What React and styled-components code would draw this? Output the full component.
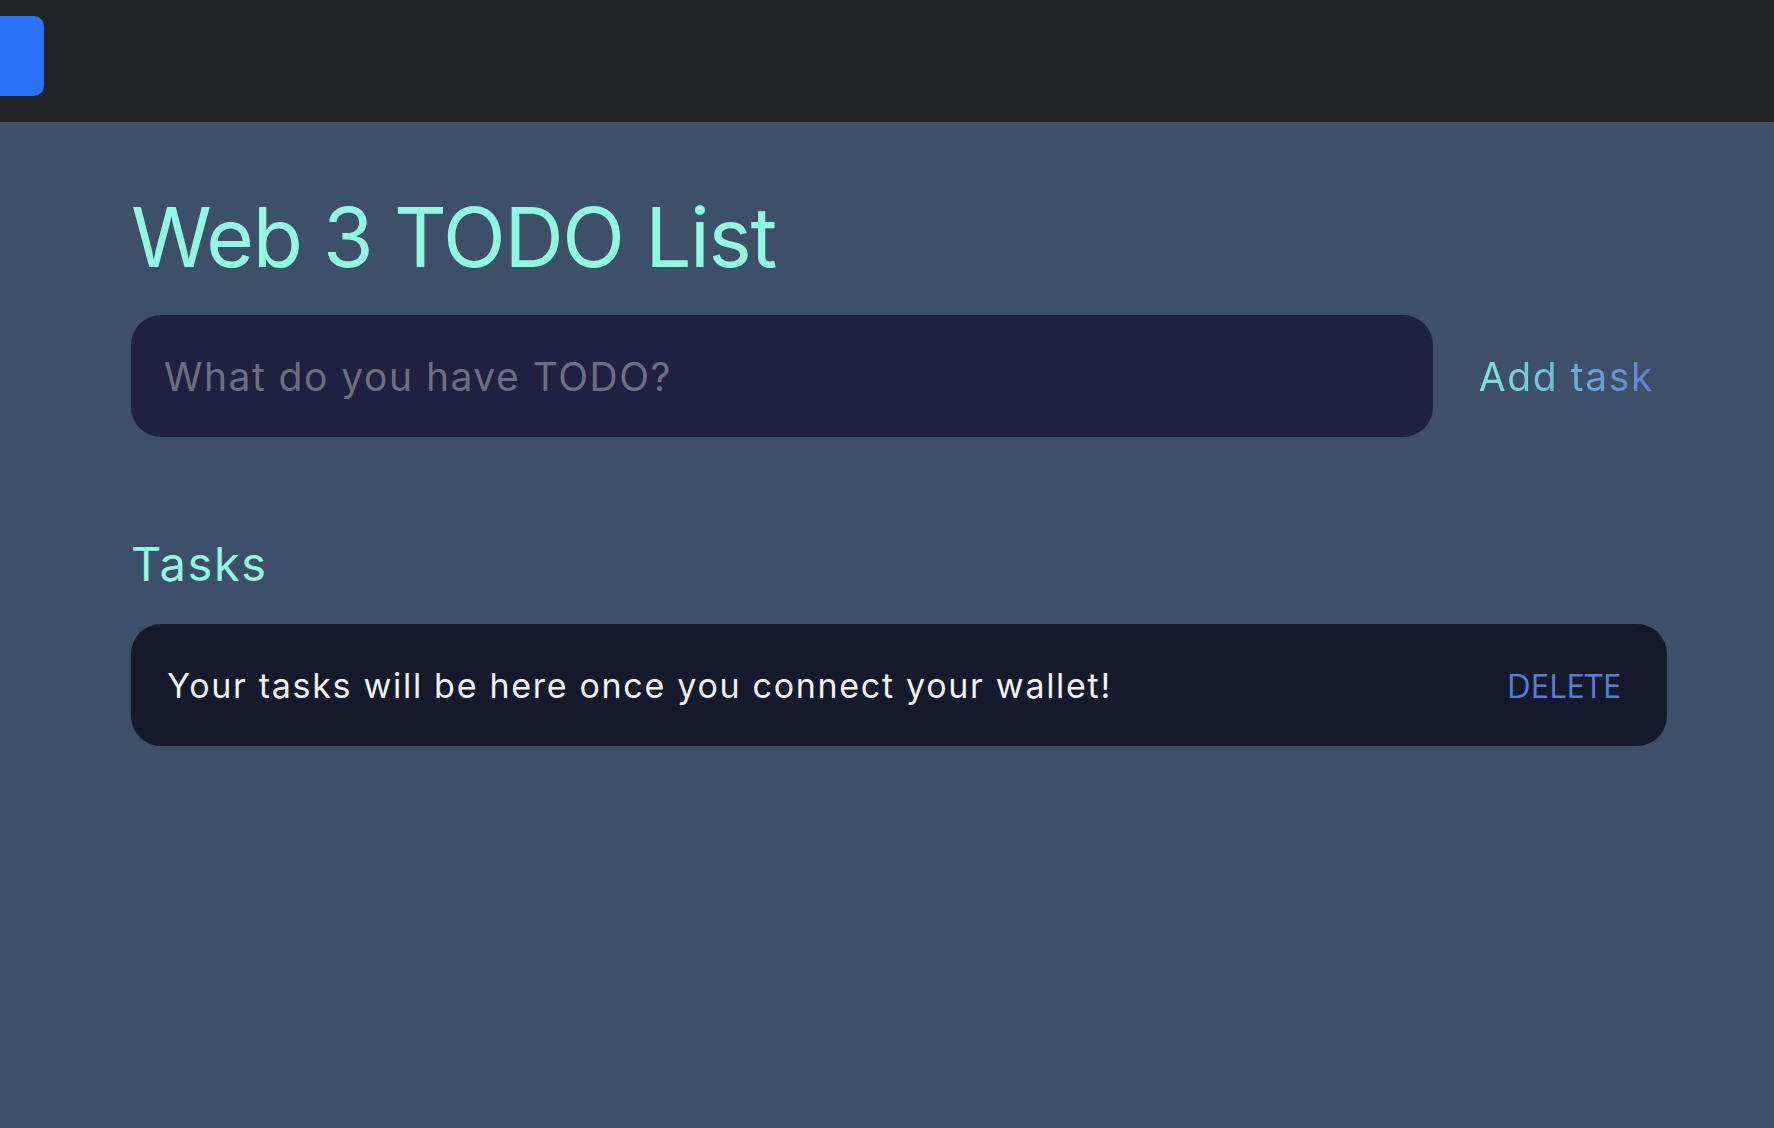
import React from 'react';
import styled, { createGlobalStyle } from 'styled-components';

const GlobalStyle = createGlobalStyle`
  html, body {
    margin: 0;
    padding: 0;
    background: #3e4f6a;
    font-family: Inter, "Noto Sans", sans-serif;
  }
  * {
    box-sizing: border-box;
  }
`;

const Page = styled.div`
  min-height: 100vh;
  background: #3e4f6a;
`;

const TopBar = styled.header`
  height: 122px;
  background: #222428;
  display: flex;
  align-items: flex-start;
  padding-top: 16px;
`;

const WalletButton = styled.button`
  width: 44px;
  height: 80px;
  border: none;
  background: #2b71f6;
  border-radius: 0 10px 10px 0;
  cursor: pointer;
`;

const Main = styled.main`
  width: 1536px;
  margin-left: 131px;
  padding-top: 61px;
`;

const Title = styled.h1`
  margin: 0;
  font-size: 82px;
  font-weight: 400;
  line-height: 110px;
  color: #92f8e2;
  letter-spacing: -1.4px;
`;

const InputRow = styled.div`
  display: flex;
  align-items: center;
  gap: 33px;
  margin-top: 22px;
`;

const TaskInput = styled.input`
  flex: 1;
  height: 122px;
  border: none;
  outline: none;
  border-radius: 30px;
  background: #1e2140;
  padding: 0 33px;
  font-family: Inter, "Noto Sans", sans-serif;
  font-size: 39px;
  letter-spacing: 1.5px;
  color: #e8e8ee;

  &::placeholder {
    color: #6b7081;
  }
`;

const AddButton = styled.button`
  border: none;
  background: none;
  padding: 0 13px;
  font-family: Inter, "Noto Sans", sans-serif;
  font-size: 39px;
  font-weight: 400;
  letter-spacing: 1.6px;
  cursor: pointer;
  background-image: linear-gradient(90deg, #82f0dc 0%, #5a78d8 100%);
  -webkit-background-clip: text;
  background-clip: text;
  color: transparent;
`;

const SectionTitle = styled.h2`
  margin: 97px 0 0;
  font-size: 47px;
  font-weight: 400;
  line-height: 60px;
  letter-spacing: 1.6px;
  color: #92f8e2;
`;

const TaskList = styled.ul`
  list-style: none;
  margin: 30px 0 0;
  padding: 0;
`;

const TaskCard = styled.li`
  height: 122px;
  border-radius: 30px;
  background: #141a2c;
  display: flex;
  align-items: center;
  justify-content: space-between;
  padding: 0 46px 0 36px;
`;

const TaskText = styled.span`
  font-size: 34px;
  letter-spacing: 1.7px;
  color: #f2f2f4;
`;

const DeleteButton = styled.button`
  border: none;
  background: none;
  padding: 0;
  font-family: "Open Sans", "Noto Sans", sans-serif;
  font-size: 33px;
  color: #5a7cd8;
  cursor: pointer;
`;

export default function App() {
  return (
    <>
      <GlobalStyle />
      <Page>
        <TopBar>
          <WalletButton aria-label="Connect wallet" />
        </TopBar>
        <Main>
          <Title>Web 3 TODO List</Title>
          <InputRow>
            <TaskInput placeholder="What do you have TODO?" />
            <AddButton>Add task</AddButton>
          </InputRow>
          <SectionTitle>Tasks</SectionTitle>
          <TaskList>
            <TaskCard>
              <TaskText>Your tasks will be here once you connect your wallet!</TaskText>
              <DeleteButton>DELETE</DeleteButton>
            </TaskCard>
          </TaskList>
        </Main>
      </Page>
    </>
  );
}
